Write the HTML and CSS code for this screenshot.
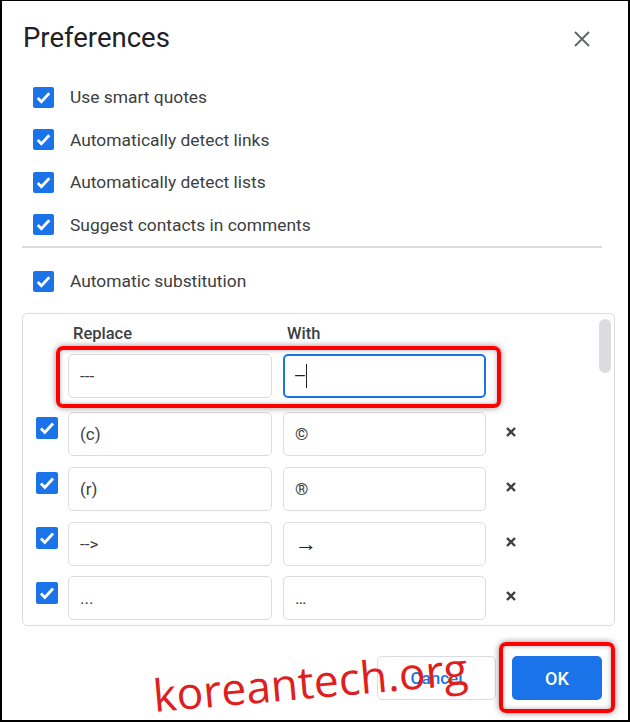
FILE: index.html
```html
<!DOCTYPE html>
<html lang="en">
<head>
  <meta charset="UTF-8">
  <title>Preferences</title>
  <link rel="stylesheet" href="styles.css">
</head>
<body>
  <div class="dialog">
    <!-- Header -->
    <div class="header">
      <h1>Preferences</h1>
      <svg class="close" width="16" height="16" viewBox="0 0 16 16">
        <path d="M1 1L15 15M15 1L1 15" stroke="#5f6368" stroke-width="1.8" fill="none"/>
      </svg>
    </div>

    <!-- General options -->
    <div class="options">
      <label class="option"><span class="check"></span>Use smart quotes</label>
      <label class="option"><span class="check"></span>Automatically detect links</label>
      <label class="option"><span class="check"></span>Automatically detect lists</label>
      <label class="option"><span class="check"></span>Suggest contacts in comments</label>
    </div>

    <div class="divider"></div>

    <label class="option sub"><span class="check"></span>Automatic substitution</label>

    <!-- Substitution table -->
    <div class="table">
      <div class="thumb"></div>
      <div class="grid">
        <span></span>
        <div class="col-title">Replace</div>
        <div class="col-title">With</div>
        <span></span>

        <span></span>
        <div class="field new">---</div>
        <div class="field new focus"><span class="caret">—</span></div>
        <span></span>

        <span class="check big"></span>
        <div class="field">(c)</div>
        <div class="field">©</div>
        <span class="del"></span>

        <span class="check big"></span>
        <div class="field">(r)</div>
        <div class="field">®</div>
        <span class="del"></span>

        <span class="check big"></span>
        <div class="field">--&gt;</div>
        <div class="field"><span class="arrow">→</span></div>
        <span class="del"></span>

        <span class="check big"></span>
        <div class="field">...</div>
        <div class="field">…</div>
        <span class="del"></span>
      </div>
      <div class="mark mark-row"></div>
    </div>

    <!-- Footer -->
    <div class="footer">
      <button class="btn cancel">Cancel</button>
      <button class="btn ok">OK</button>
      <div class="mark mark-ok"></div>
    </div>

    <div class="watermark">koreantech.org</div>
  </div>
</body>
</html>
```

FILE: styles.css
```css
:root {
  --blue: #1a73e8;
  --text: #3c4043;
  --line: #dadce0;
  --red: #f00;
}

* {
  box-sizing: border-box;
}

body {
  margin: 0;
  background: #fff;
  font-family: Roboto, "Liberation Sans", sans-serif;
  color: var(--text);
}

.dialog {
  position: relative;
  width: 630px;
  height: 722px;
  border: 2px solid #000;
  border-top-width: 1px;
  overflow: hidden;
}

/* Header */
.header {
  display: flex;
  justify-content: space-between;
  align-items: center;
  padding: 21px 38px 0 21px;
}

h1 {
  margin: 0;
  font-size: 27.5px;
  font-weight: 400;
  line-height: 32px;
  color: #202124;
}

.close {
  margin-top: 1px;
}

/* Checkbox rows */
.options {
  padding-top: 22px;
}

.option {
  display: flex;
  align-items: center;
  height: 42.5px;
  padding-left: 31px;
  font-size: 17.4px;
  color: var(--text);
}

.check {
  display: inline-block;
  width: 21px;
  height: 21px;
  margin-right: 16px;
  border-radius: 2px;
  background: var(--blue) url("data:image/svg+xml,%3Csvg xmlns='http://www.w3.org/2000/svg' viewBox='0 0 20 20'%3E%3Cpath d='M4.5 10.5l3.5 3.5 7.5-8' stroke='white' stroke-width='2.6' fill='none'/%3E%3C/svg%3E") center / 100% no-repeat;
  flex-shrink: 0;
}

.divider {
  height: 2px;
  background: var(--line);
  margin: 0 26px 12px 20px;
}

.sub {
  height: 42px;
}

/* Table */
.table {
  position: relative;
  margin: 11px 13px 0 20px;
  height: 313px;
  border: 1px solid var(--line);
  border-radius: 5px;
}

.thumb {
  position: absolute;
  right: 3px;
  top: 5px;
  width: 12px;
  height: 54px;
  border-radius: 6px;
  background: var(--line);
}

.grid {
  display: grid;
  grid-template-columns: 22px 204px 204px 40px;
  grid-template-rows: 25px repeat(4, 44px) 42px;
  column-gap: 10px;
  row-gap: 11px;
  align-items: center;
  padding: 7px 0 0 13px;
}

.grid > :nth-child(4n+3) {
  margin-left: 1px;
}

.col-title {
  font-size: 16.5px;
  font-weight: 500;
  padding-left: 5px;
  color: var(--text);
}

.grid > .col-title:nth-child(3) {
  padding-left: 4px;
}

.field {
  height: 44px;
  border: 1px solid var(--line);
  border-radius: 5px;
  padding: 0 11px;
  display: flex;
  align-items: center;
  font-size: 17px;
  color: var(--text);
}

.field.new {
  align-self: start;
  margin-top: -3px;
}

.field.focus {
  border: 2px solid var(--blue);
  padding-left: 9px;
  font-size: 15px;
}

.caret {
  border-right: 1.5px solid #202124;
  line-height: 24px;
  color: #202124;
}

.arrow {
  font-family: "Liberation Serif", serif;
  font-size: 22px;
  color: #202124;
}

.check.big {
  width: 22px;
  height: 22px;
  margin: 5px 0 0;
  justify-self: start;
  align-self: start;
}

.del {
  width: 10px;
  height: 10px;
  margin-left: 10px;
  margin-top: -4px;
  background: url("data:image/svg+xml,%3Csvg xmlns='http://www.w3.org/2000/svg' viewBox='0 0 10 10'%3E%3Cpath d='M1 1L9 9M9 1L1 9' stroke='%233c4043' stroke-width='2.4' fill='none'/%3E%3C/svg%3E") center / 100% no-repeat;
}

/* Red highlight marks */
.mark {
  position: absolute;
  border: 4px solid var(--red);
  border-radius: 7px;
  box-shadow: 0 0 6px rgba(0, 0, 0, 0.45), inset 0 0 5px rgba(0, 0, 0, 0.3);
}

.mark-row {
  left: 33px;
  top: 32px;
  width: 445px;
  height: 62px;
}

/* Footer */
.footer {
  position: relative;
  display: flex;
  justify-content: flex-end;
  gap: 16px;
  padding: 30px 26px 0 0;
}

.btn {
  height: 44px;
  border-radius: 5px;
  font-family: Roboto, "Liberation Sans", sans-serif;
  font-size: 17px;
  font-weight: 500;
}

.cancel {
  width: 119px;
  border: 1px solid var(--line);
  background: #fff;
  color: var(--blue);
}

.ok {
  width: 90px;
  border: none;
  background: var(--blue);
  color: #fff;
  font-size: 18px;
}

.mark-ok {
  right: 13px;
  top: 16px;
  width: 116px;
  height: 71px;
}

/* Watermark */
.watermark {
  position: absolute;
  left: 153px;
  top: 672px;
  font-family: "Open Sans", sans-serif;
  font-size: 44.5px;
  line-height: 1;
  color: #e01e1e;
  transform: rotate(-5deg);
  transform-origin: left bottom;
  white-space: nowrap;
}
```
